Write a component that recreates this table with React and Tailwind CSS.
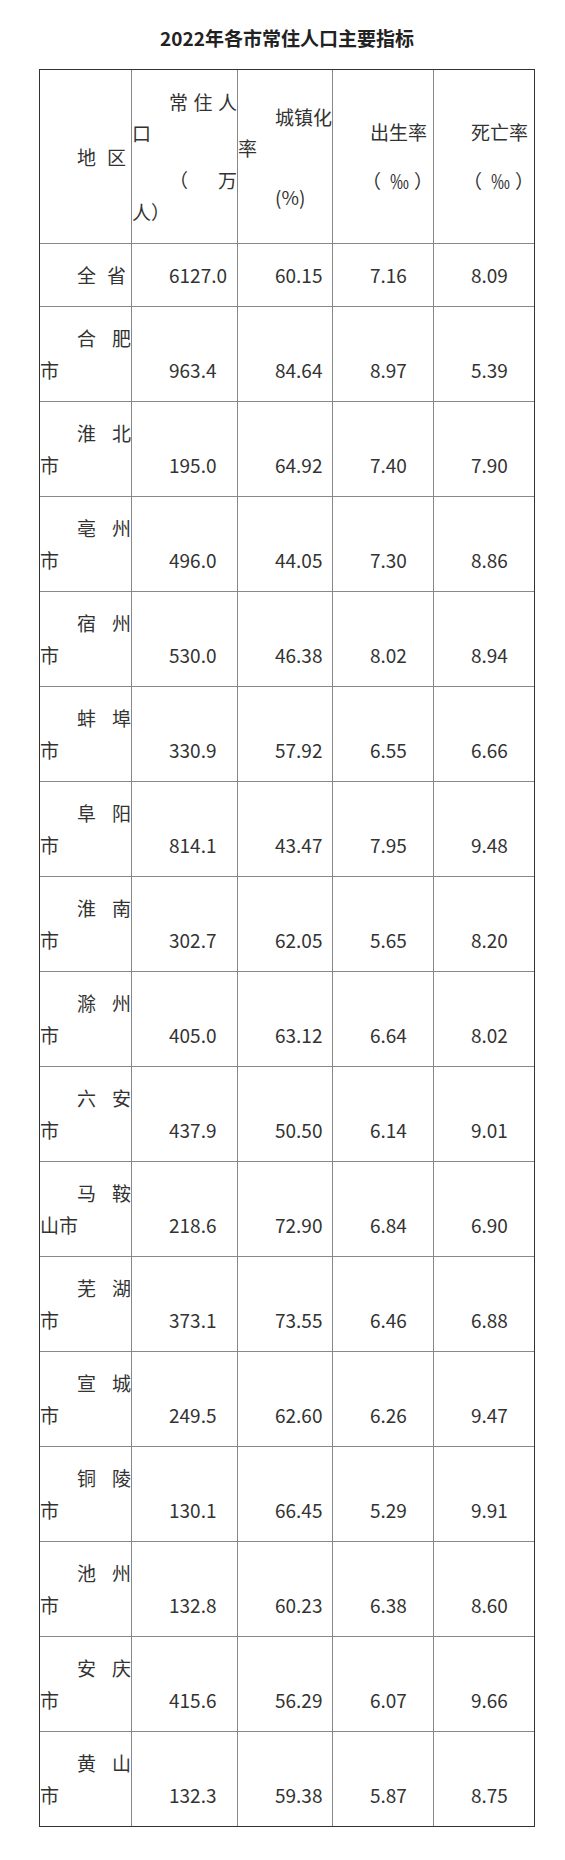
import React from 'react';

const rows = [
  ['合', '肥', '市', '963.4', '84.64', '8.97', '5.39'],
  ['淮', '北', '市', '195.0', '64.92', '7.40', '7.90'],
  ['亳', '州', '市', '496.0', '44.05', '7.30', '8.86'],
  ['宿', '州', '市', '530.0', '46.38', '8.02', '8.94'],
  ['蚌', '埠', '市', '330.9', '57.92', '6.55', '6.66'],
  ['阜', '阳', '市', '814.1', '43.47', '7.95', '9.48'],
  ['淮', '南', '市', '302.7', '62.05', '5.65', '8.20'],
  ['滁', '州', '市', '405.0', '63.12', '6.64', '8.02'],
  ['六', '安', '市', '437.9', '50.50', '6.14', '9.01'],
  ['马', '鞍', '山市', '218.6', '72.90', '6.84', '6.90'],
  ['芜', '湖', '市', '373.1', '73.55', '6.46', '6.88'],
  ['宣', '城', '市', '249.5', '62.60', '6.26', '9.47'],
  ['铜', '陵', '市', '130.1', '66.45', '5.29', '9.91'],
  ['池', '州', '市', '132.8', '60.23', '6.38', '8.60'],
  ['安', '庆', '市', '415.6', '56.29', '6.07', '9.66'],
  ['黄', '山', '市', '132.3', '59.38', '5.87', '8.75'],
];

// column widths include the right border
const cols = ['w-[92px]', 'w-[106px]', 'w-[95px]', 'w-[101px]', 'w-[100px]'];
const line = 'leading-[31.6px]';

const Cell = ({ i, children }) => (
  <div
    className={`${cols[i]} shrink-0 flex flex-col justify-center ${i < 4 ? 'border-r border-[#888]' : ''}`}
  >
    {children}
  </div>
);

const Num = ({ value }) => <div className={`${line} pl-[37px] pt-[31.6px]`}>{value}</div>;

const Permille = () => (
  <div className={`${line} pl-[29px] mt-[17px] flex whitespace-nowrap`}>
    <span>（</span>
    <span className="inline-block w-[25px] ml-[8px] text-center">‰</span>
    <span className="ml-[4px]">）</span>
  </div>
);

export default function App() {
  return (
    <div
      className="bg-white text-[#333] text-[19px]"
      style={{ fontFamily: '"Noto Sans CJK SC", "Noto Sans", sans-serif' }}
    >
      <div className="ml-[39px] w-[496px] pt-[24px] pb-[34px]">
        <h1 className="h-[28px] leading-[28px] mb-[17px] text-center text-[19px] font-bold text-[#222]">
          2022年各市常住人口主要指标
        </h1>

        <div className="border border-[#333]">
          {/* header */}
          <div className="flex h-[174px] border-b border-[#888]">
            <Cell i={0}>
              <div className={`${line} pl-[37px] flex`}>
                <span>地</span>
                <span className="ml-[11px]">区</span>
              </div>
            </Cell>
            <Cell i={1}>
              <div className={`${line} pl-[37px] flex justify-between`}>
                <span>常</span>
                <span>住</span>
                <span>人</span>
              </div>
              <div className={line}>口</div>
              <div className={`${line} pl-[37px] mt-[15px] flex justify-between`}>
                <span>（</span>
                <span>万</span>
              </div>
              <div className={line}>人）</div>
            </Cell>
            <Cell i={2}>
              <div className={`${line} pl-[37px] whitespace-nowrap`}>城镇化</div>
              <div className={line}>率</div>
              <div className={`${line} pl-[37px] mt-[17px]`}>(%)</div>
            </Cell>
            <Cell i={3}>
              <div className={`${line} pl-[37px]`}>出生率</div>
              <Permille />
            </Cell>
            <Cell i={4}>
              <div className={`${line} pl-[37px]`}>死亡率</div>
              <Permille />
            </Cell>
          </div>

          {/* province total */}
          <div className="flex h-[63px] border-b border-[#888]">
            <Cell i={0}>
              <div className={`${line} pl-[37px] flex`}>
                <span>全</span>
                <span className="ml-[11px]">省</span>
              </div>
            </Cell>
            {['6127.0', '60.15', '7.16', '8.09'].map((v, k) => (
              <Cell key={v} i={k + 1}>
                <div className={`${line} pl-[37px]`}>{v}</div>
              </Cell>
            ))}
          </div>

          {rows.map((r, idx) => (
            <div
              key={idx}
              className={`flex ${idx < rows.length - 1 ? 'h-[95px] border-b border-[#888]' : 'h-[94px]'}`}
            >
              <Cell i={0}>
                <div className={`${line} pl-[37px] flex justify-between`}>
                  <span>{r[0]}</span>
                  <span>{r[1]}</span>
                </div>
                <div className={line}>{r[2]}</div>
              </Cell>
              {r.slice(3).map((v, k) => (
                <Cell key={k} i={k + 1}>
                  <Num value={v} />
                </Cell>
              ))}
            </div>
          ))}
        </div>
      </div>
    </div>
  );
}
